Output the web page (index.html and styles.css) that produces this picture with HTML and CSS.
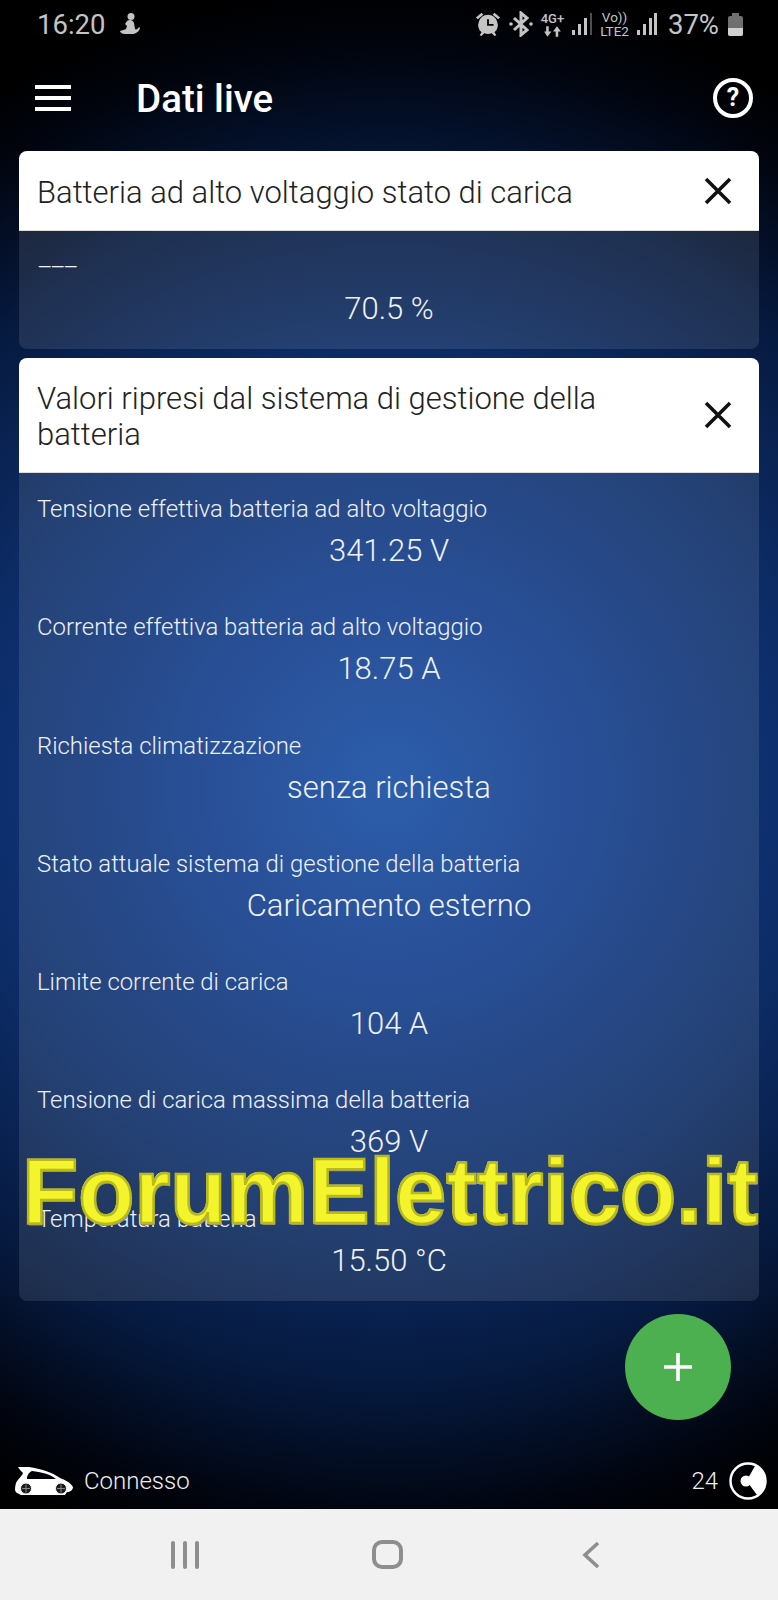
FILE: index.html
```html
<!DOCTYPE html>
<html lang="it">

<head>
    <meta charset="UTF-8" />
    <meta name="viewport" content="width=device-width, initial-scale=1.0" />
    <title>Dati live</title>
    <link rel="stylesheet" href="styles.css">
</head>

<body>
    <div class="screen">
        <div class="status-bar">
            <div class="status-left">
                <span class="clock">16:20</span>
                <svg class="icon-person" width="22" height="24" viewBox="0 0 22 24">
                    <circle cx="12" cy="4.500" r="3.500" />
                    <path d="M8 9c3-2 6-1 7 2l1 6c1 1 3 0 4-2l1 1c-1 4-5 6-8 6H6c-3 0-5-2-5-3 2-1 5-1 6-2l1-3-2-2z" />
                </svg>
            </div>
            <div class="status-right">
                <svg width="26" height="26" viewBox="0 0 28 28">
                    <path d="M1 7l6-5 2 2-6 5zM27 7l-6-5-2 2 6 5z" />
                    <path fill-rule="evenodd" d="M14 4a11 11 0 0 1 7 19l2 3-2 1-3-3a11 11 0 0 1-8 0l-3 3-2-1 2-3A11 11 0 0 1 14 4zM13 9v7h7v-2h-5V9z" />
                </svg>
                <svg class="icon-bt" width="24" height="26" viewBox="0 0 24 26">
                    <path fill="none" stroke="#c4c4c4" stroke-width="3" d="M5 7l13 12-6 5V2l6 5L5 19" />
                    <circle cx="2" cy="13" r="1.800" />
                    <circle cx="22" cy="13" r="1.800" />
                </svg>
                <div class="net">
                    <span>4G+</span>
                    <svg width="19" height="11" viewBox="0 0 18 10">
                        <path d="M3 0h2.400v5H8l-3.800 5L1 5h2zM12 10h2.400V5H17l-3.800-5L9.500 5H12z" />
                    </svg>
                </div>
                <svg class="bars" width="20" height="24" viewBox="0 0 20 24">
                    <rect x="0" y="18" width="3" height="5" />
                    <rect x="6" y="12" width="3" height="11" />
                    <rect x="12" y="6" width="3" height="17" />
                    <rect x="18" y="1" width="2" height="22" opacity="0.4" />
                </svg>
                <div class="net net-lte">
                    <span>Vo))</span>
                    <span>LTE2</span>
                </div>
                <svg class="bars" width="20" height="24" viewBox="0 0 20 24">
                    <rect x="0" y="18" width="3" height="5" />
                    <rect x="6" y="12" width="3" height="11" />
                    <rect x="12" y="6" width="3" height="17" />
                    <rect x="17" y="1" width="3" height="22" />
                </svg>
                <span class="battery-text">37%</span>
                <div class="battery"><div class="battery-level"></div></div>
            </div>
        </div>

        <div class="toolbar">
            <div class="menu-btn"><span></span><span></span><span></span></div>
            <h1>Dati live</h1>
            <div class="help-btn">?</div>
        </div>

        <div class="content">
            <div class="card">
                <div class="card-head">
                    <div class="card-title">Batteria ad alto voltaggio stato di carica</div>
                    <svg class="close" width="28" height="28" viewBox="0 0 28 28">
                        <path d="M2 2l24 24M26 2L2 26" />
                    </svg>
                </div>
                <div class="card-body">
                    <div class="row">
                        <div class="row-label row-dash">–––</div>
                        <div class="row-value">70.5 %</div>
                    </div>
                </div>
            </div>

            <div class="card">
                <div class="card-head card-head-tall">
                    <div class="card-title">Valori ripresi dal sistema di gestione della batteria</div>
                    <svg class="close" width="28" height="28" viewBox="0 0 28 28">
                        <path d="M2 2l24 24M26 2L2 26" />
                    </svg>
                </div>
                <div class="card-body">
                    <div class="row">
                        <div class="row-label">Tensione effettiva batteria ad alto voltaggio</div>
                        <div class="row-value">341.25 V</div>
                    </div>
                    <div class="row">
                        <div class="row-label">Corrente effettiva batteria ad alto voltaggio</div>
                        <div class="row-value">18.75 A</div>
                    </div>
                    <div class="row">
                        <div class="row-label">Richiesta climatizzazione</div>
                        <div class="row-value">senza richiesta</div>
                    </div>
                    <div class="row">
                        <div class="row-label">Stato attuale sistema di gestione della batteria</div>
                        <div class="row-value">Caricamento esterno</div>
                    </div>
                    <div class="row">
                        <div class="row-label">Limite corrente di carica</div>
                        <div class="row-value">104 A</div>
                    </div>
                    <div class="row">
                        <div class="row-label">Tensione di carica massima della batteria</div>
                        <div class="row-value">369 V</div>
                    </div>
                    <div class="row">
                        <div class="row-label">Temperatura batteria</div>
                        <div class="row-value">15.50 °C</div>
                    </div>
                </div>
            </div>
        </div>

        <div class="footer">
            <div class="footer-side">
                <svg class="car" width="58" height="29" viewBox="0 0 58 29">
                    <path class="car-fill" fill-rule="evenodd" d="M3 0L14 0C26 2 37 5 45 11C50 13 55 15 58 20C58 23 55 25 52 25L50 28H6L2 26C-1 24 0 20 1 16C3 12 7 9 8 6C6 4 4 2 3 0ZM17 4C13 6 12 9 12 12L41 12C35 7 26 5 17 4Z" />
                    <circle class="wheel" cx="11" cy="21.500" r="5.500" />
                    <circle class="wheel" cx="46" cy="21.500" r="5.500" />
                    <path class="spokes" d="M11 17.500v8M7 21.500h8M46 17.500v8M42 21.500h8" />
                </svg>
                <span>Connesso</span>
            </div>
            <div class="footer-side">
                <span>24</span>
                <svg width="38" height="38" viewBox="0 0 38 38">
                    <circle class="ring" cx="19" cy="19" r="17.500" />
                    <path class="ring-fill" d="M26 4A16.500 16.500 0 0 1 28 33L21 23.500L20 14.500Z" />
                    <circle class="ring-fill" cx="17" cy="19" r="5.500" />
                </svg>
            </div>
        </div>

        <div class="nav-bar">
            <div class="nav-slot">
                <div class="nav-recent"><span></span><span></span><span></span></div>
            </div>
            <div class="nav-slot">
                <div class="nav-home"></div>
            </div>
            <div class="nav-slot">
                <svg class="nav-back" width="18" height="28" viewBox="0 0 18 28">
                    <path d="M16 2L3 14l13 12" />
                </svg>
            </div>
        </div>

        <div class="fab">
            <svg width="30" height="30" viewBox="0 0 30 30">
                <path d="M15 1v28M1 15h28" />
            </svg>
        </div>

        <div class="watermark">ForumElettrico.it</div>
    </div>
</body>

</html>
```

FILE: styles.css
```css
* {
    box-sizing: border-box;
}

body {
    margin: 0;
    font-family: Roboto, "Liberation Sans", sans-serif;
    background: #000;
}

.screen {
    position: relative;
    width: 778px;
    height: 1600px;
    overflow: hidden;
    display: flex;
    flex-direction: column;
    background: radial-gradient(circle 800px at 389px 785px, #164ca2 0%, #103b8a 25%, #0d2d68 52%, #06193d 75%, #01040d 92%, #000 100%);
}

.status-bar {
    height: 48px;
    flex-shrink: 0;
    padding: 0 35px 0 37px;
    display: flex;
    justify-content: space-between;
    align-items: center;
    color: #c4c4c4;
}

.status-bar svg {
    fill: #c4c4c4;
}

.status-left,
.status-right {
    display: flex;
    align-items: center;
}

.clock {
    font-size: 27.500px;
    margin-right: 14px;
}

.status-right {
    gap: 8px;
}

.net {
    display: flex;
    flex-direction: column;
    align-items: center;
    font-size: 13px;
    line-height: 13px;
    font-weight: 500;
}

.net svg {
    margin-top: 1px;
}

.net-lte {
    line-height: 14px;
    font-size: 13.500px;
    font-weight: 400;
}

.battery-text {
    font-size: 27.500px;
    margin-left: 3px;
}

.battery {
    position: relative;
    width: 15px;
    height: 20px;
    margin: 3px 0 0 1px;
    background: #6f6f6f;
    border-radius: 2px;
    display: flex;
    align-items: flex-end;
}

.battery::before {
    content: "";
    position: absolute;
    left: 4px;
    top: -3px;
    width: 7px;
    height: 3px;
    background: #6f6f6f;
}

.battery-level {
    width: 100%;
    height: 8px;
    background: #d0d0d0;
    border-radius: 0 0 2px 2px;
}

.toolbar {
    height: 103px;
    flex-shrink: 0;
    display: flex;
    align-items: center;
    padding: 0 25px 4px 35px;
}

.menu-btn {
    width: 36px;
    display: flex;
    flex-direction: column;
    gap: 7px;
}

.menu-btn span {
    display: block;
    height: 4px;
    background: #fff;
}

h1 {
    flex: 1;
    margin: 2px 0 0 65px;
    font-size: 38.500px;
    font-weight: 500;
    color: #fff;
}

.help-btn {
    width: 40px;
    height: 40px;
    border: 4px solid #fff;
    border-radius: 50%;
    color: #fff;
    font-size: 25px;
    font-weight: 700;
    display: flex;
    align-items: center;
    justify-content: center;
}

.content {
    flex: 1;
    padding: 0 19px;
    display: flex;
    flex-direction: column;
    gap: 9px;
}

.card {
    border-radius: 8px;
    overflow: hidden;
    background: rgba(255, 255, 255, 0.1);
}

.card-head {
    min-height: 80px;
    background: #fff;
    color: #222;
    display: flex;
    align-items: center;
    padding: 0 27px 0 18px;
    border-bottom: 1px solid #ddd;
}

.card-head-tall {
    min-height: 115px;
}

.card-title {
    flex: 1;
    font-size: 31px;
    font-weight: 300;
    line-height: 36px;
    padding: 4px 60px 0 0;
}

.close {
    flex-shrink: 0;
    stroke: #111;
    stroke-width: 3.600;
    fill: none;
}

.card-body {
    padding: 21px 18px 20px;
    display: flex;
    flex-direction: column;
    gap: 41.300px;
    color: #eef1f6;
    font-weight: 300;
}

.row-label {
    font-size: 23.900px;
    line-height: 30px;
    margin-bottom: 6px;
}

.row-dash {
    letter-spacing: -2.500px;
}

.row-value {
    font-size: 31px;
    line-height: 41px;
    text-align: center;
}

.footer {
    height: 44px;
    margin-bottom: 6px;
    padding: 0 11px 0 15px;
    display: flex;
    justify-content: space-between;
    align-items: center;
    color: #eee;
    font-size: 24px;
    font-weight: 300;
}

.footer-side {
    display: flex;
    align-items: center;
    gap: 11px;
}

.car-fill {
    fill: #fff;
}

.wheel {
    fill: #1a1a1a;
    stroke: #fff;
    stroke-width: 1;
}

.spokes {
    stroke: #888;
    stroke-width: 1;
}

.ring {
    fill: none;
    stroke: #fff;
    stroke-width: 2.500;
}

.ring-fill {
    fill: #fff;
}

.nav-bar {
    height: 91px;
    flex-shrink: 0;
    background: #f1f1f1;
    display: flex;
    align-items: center;
    justify-content: center;
    padding-right: 4px;
}

.nav-slot {
    width: 202px;
    display: flex;
    justify-content: center;
}

.nav-recent {
    display: flex;
    gap: 8px;
}

.nav-recent span {
    width: 4px;
    height: 28px;
    border-radius: 2px;
    background: #8e8e8e;
}

.nav-home {
    width: 31px;
    height: 29px;
    border: 4px solid #8e8e8e;
    border-radius: 10px;
}

.nav-back {
    margin-left: 3px;
    fill: none;
    stroke: #8e8e8e;
    stroke-width: 3.600;
}

.fab {
    position: absolute;
    left: 625px;
    top: 1314px;
    width: 106px;
    height: 106px;
    border-radius: 50%;
    background: #4caf50;
    display: flex;
    align-items: center;
    justify-content: center;
}

.fab svg {
    stroke: #fff;
    stroke-width: 3.600;
    fill: none;
}

.watermark {
    position: absolute;
    left: 22px;
    top: 1136px;
    font-family: "Liberation Sans", Arial, sans-serif;
    font-size: 92px;
    line-height: 110px;
    font-weight: 700;
    white-space: nowrap;
    color: #f4f42c;
    -webkit-text-stroke: 2.500px #b9b91c;
    text-shadow: -1px -1px 0 #fbfb9a, 1px 2px 0 #8d8d8d;
}
```
